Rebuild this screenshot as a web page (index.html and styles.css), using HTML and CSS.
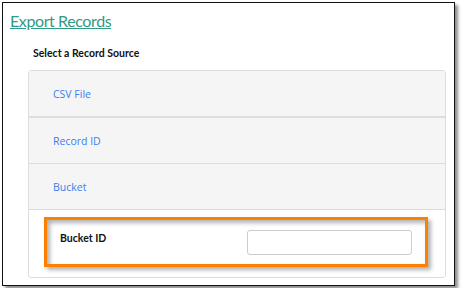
FILE: index.html
```html
<!DOCTYPE html>
<html lang="en">

    <head>
        <meta charset="UTF-8">
        <meta name="viewport" content="width=device-width, initial-scale=1.0">
        <title>Export Records</title>

        <link rel="stylesheet" href="styles.css">
    </head>

    <body>
        <div class="frame">
            <h1><a href="#">Export Records</a></h1>
            <h2>Select a Record Source</h2>

            <div class="panel">
                <div class="row"><a href="#">CSV File</a></div>
                <div class="row"><a href="#">Record ID</a></div>
                <div class="row"><a href="#">Bucket</a></div>
                <div class="panel-body">
                    <div class="callout">
                        <label for="bucket">Bucket ID</label>
                        <input type="text" id="bucket">
                    </div>
                </div>
            </div>
        </div>
    </body>

</html>
```

FILE: styles.css
```css
* {
    box-sizing: border-box;
}

body,
html {
    margin: 0;
    padding: 0;
    background-color: #fff;
    font-family: 'Open Sans', 'Noto Sans', sans-serif;
}

.frame {
    margin: 2px;
    width: 453px;
    height: 284px;
    border: 1px solid #111;
    box-shadow: 3px 3px 3px rgba(0, 0, 0, 0.45);
    padding: 0 0 0 7px;
}

h1 {
    margin: 6px 0 0;
    font-family: Lato, 'Open Sans', sans-serif;
    font-size: 16px;
    font-weight: normal;
    line-height: 23px;
    letter-spacing: -0.4px;
}

h1 a {
    color: #2f9a86;
}

h2 {
    margin: 14px 0 0 23px;
    font-family: Lato, 'Open Sans', sans-serif;
    font-size: 10.5px;
    font-weight: bold;
    line-height: 14px;
    color: #111;
}

.panel {
    margin: 10px 0 0 18px;
    width: 418px;
    border: 1px solid #ddd;
    border-radius: 3px;
}

.row {
    height: 46px;
    background-color: #f5f5f5;
    border-bottom: 1px solid #ddd;
    padding-left: 24px;
    display: flex;
    align-items: center;
    font-size: 10.5px;
}

.row:first-child {
    border-bottom-width: 2px;
    height: 47px;
}

.row a {
    color: #3a7ef0;
    text-decoration: none;
}

.panel-body {
    height: 67px;
    padding: 7px 0 0 15px;
}

.callout {
    width: 384px;
    height: 50px;
    border: 3px solid #ff8000;
    box-shadow: 3px 3px 4px rgba(0, 0, 0, 0.3), inset 3px 3px 4px rgba(0, 0, 0, 0.3);
    display: flex;
    justify-content: space-between;
    padding: 10px 13px 0;
}

.callout label {
    font-family: Lato, 'Open Sans', sans-serif;
    font-size: 10.5px;
    font-weight: bold;
    color: #111;
    padding-top: 2px;
}

.callout input {
    width: 165px;
    height: 25px;
    border: 1px solid #ccc;
    border-radius: 3px;
}
```
